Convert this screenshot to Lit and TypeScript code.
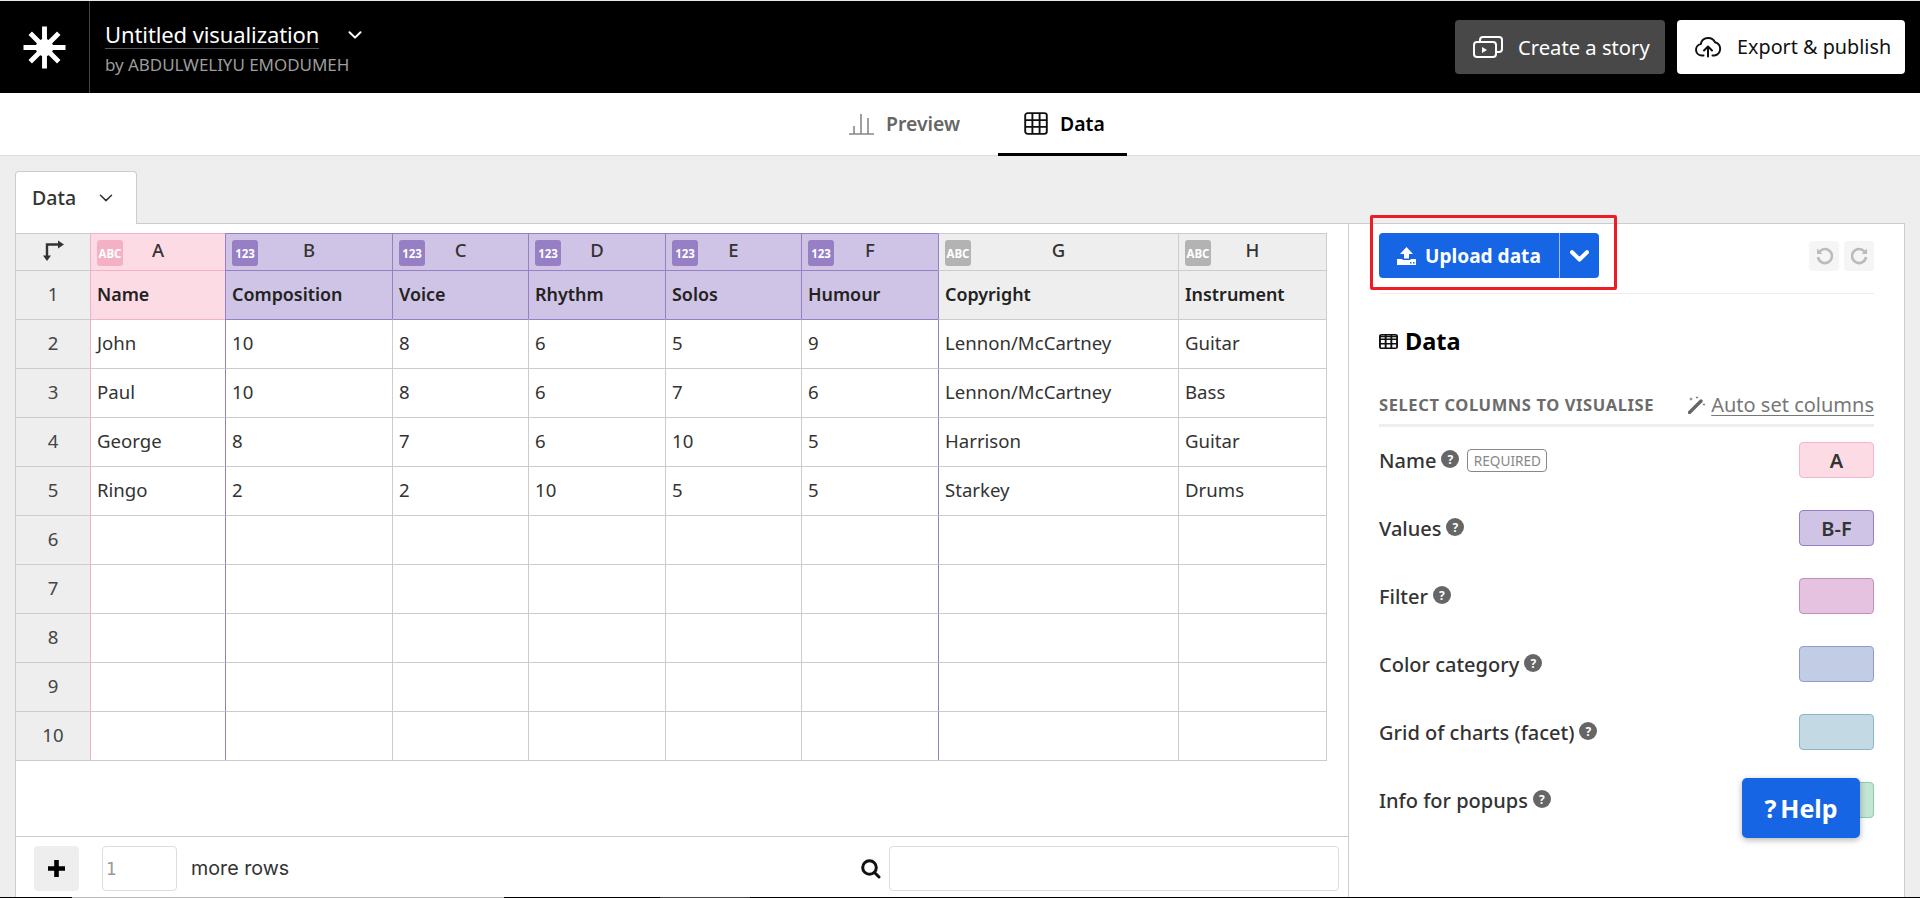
import { LitElement, html, css } from "lit";
import { customElement } from "lit/decorators.js";

type ColKind = "pink" | "purple" | "gray";
const cols: { l: string; name: string; kind: ColKind; badge: string; w: number; cells: string[] }[] = [
  { l: "A", name: "Name", kind: "pink", badge: "ABC", w: 135, cells: ["John", "Paul", "George", "Ringo"] },
  { l: "B", name: "Composition", kind: "purple", badge: "123", w: 167, cells: ["10", "10", "8", "2"] },
  { l: "C", name: "Voice", kind: "purple", badge: "123", w: 136, cells: ["8", "8", "7", "2"] },
  { l: "D", name: "Rhythm", kind: "purple", badge: "123", w: 137, cells: ["6", "6", "6", "10"] },
  { l: "E", name: "Solos", kind: "purple", badge: "123", w: 136, cells: ["5", "7", "10", "5"] },
  { l: "F", name: "Humour", kind: "purple", badge: "123", w: 137, cells: ["9", "6", "5", "5"] },
  { l: "G", name: "Copyright", kind: "gray", badge: "ABC", w: 240, cells: ["Lennon/McCartney", "Lennon/McCartney", "Harrison", "Starkey"] },
  { l: "H", name: "Instrument", kind: "gray", badge: "ABC", w: 148, cells: ["Guitar", "Bass", "Guitar", "Drums"] },
];

const bindings = [
  { label: "Name", req: true, value: "A", cls: "b-pink" },
  { label: "Values", req: false, value: "B-F", cls: "b-purple" },
  { label: "Filter", req: false, value: "", cls: "b-mauve" },
  { label: "Color category", req: false, value: "", cls: "b-blue" },
  { label: "Grid of charts (facet)", req: false, value: "", cls: "b-teal" },
  { label: "Info for popups", req: false, value: "", cls: "b-green" },
];

const chevron = (w: number, h: number, color: string, sw: number) => html`<svg width=${w} height=${h} viewBox="0 0 14 8" fill="none" stroke=${color} stroke-width=${sw} stroke-linecap="round" stroke-linejoin="round"><path d="M1.5 1.2 7 6.6 12.5 1.2"/></svg>`;

const logo = html`<svg width="43" height="43" viewBox="0 0 44 44" fill="none" stroke="#fff" stroke-width="5"><path d="M22 0.5V43.5M0.5 22H43.5M7.4 7.4 36.6 36.6M36.6 7.4 7.4 36.6"/><circle cx="22" cy="22" r="9" fill="#fff" stroke="none"/></svg>`;

const gridIcon = (w: number, h: number, sw: number) => html`<svg width=${w} height=${h} viewBox="0 0 24 24" fill="none" stroke="#111" stroke-width=${sw} preserveAspectRatio="none"><rect x="1.2" y="1.2" width="21.6" height="21.6" rx="2.5"/><path d="M8.4 1.2V22.8M15.6 1.2V22.8M1.2 8.4H22.8M1.2 15.6H22.8"/></svg>`;

@customElement("app-root")
export class AppRoot extends LitElement {
  static styles = css`
    :host { display: block; position: relative; height: 898px; overflow: hidden; background: #eee; font-family: "Noto Sans", "Open Sans", sans-serif; color: #333; }
    * { box-sizing: border-box; }
    .top { height: 93px; background: #000; border-top: 1px solid #e8e8e8; display: flex; align-items: stretch; color: #fff; }
    .logo { width: 90px; border-right: 1px solid #444; display: flex; align-items: center; justify-content: center; padding-right: 1px; }
    .meta { margin-left: 15px; display: flex; flex-direction: column; padding-top: 19px; }
    .title-row { display: flex; align-items: center; height: 29px; }
    .title { font-size: 22px; line-height: 28px; border-bottom: 1px solid #555; letter-spacing: -0.1px; }
    .title-row svg { margin-left: 29px; }
    .by { font-size: 17px; color: #9c9c9c; margin-top: 6px; line-height: 20px; letter-spacing: -0.05px; }
    .actions { margin-left: auto; margin-right: 15px; display: flex; gap: 12px; align-items: center; }
    .btn { height: 54px; border-radius: 4px; display: flex; align-items: center; font-size: 20.2px; padding-bottom: 1px; }
    .story { width: 210px; background: #484848; color: #fff; padding-left: 18px; gap: 15px; }
    .export { width: 228px; background: #fff; color: #111; padding-left: 18px; gap: 15px; font-size: 19.8px; }

    .tabs { height: 63px; background: #fff; border-bottom: 1px solid #ddd; display: flex; justify-content: center; padding-left: 30px; gap: 15px; }
    .tab { height: 63px; display: flex; align-items: center; gap: 12px; font-size: 19.4px; font-weight: 600; color: #666; padding: 0 0 2px 26px; width: 160px; }
    .tab.on { color: #000; border-bottom: 3px solid #000; padding-bottom: 0; width: 129px; }

    .main { height: 742px; padding: 15px 15px 0; display: flex; flex-direction: column; }
    .sheet-tab { width: 122px; height: 53px; background: #fff; border: 1px solid #ccc; border-bottom: none; border-radius: 4px 4px 0 0; display: flex; align-items: center; padding: 0 0 1px 16px; font-size: 19.5px; font-weight: 500; color: #333; margin-bottom: -1px; position: relative; z-index: 1; }
    .sheet-tab svg { margin-left: 23px; }
    .panel { flex: 1; background: #fff; border: 1px solid #ccc; border-bottom: none; display: flex; min-height: 0; }

    .left { width: 1333px; border-right: 1px solid #ccc; display: flex; flex-direction: column; }
    .table-wrap { flex: 1; padding-top: 9px; margin-left: -1px; }
    .table { display: grid; width: fit-content; grid-auto-rows: 49px; grid-template-rows: 37px; border-bottom: 1px solid #ccc; border-right: 1px solid #ccc; }
    .c { border-left: 1px solid #ccc; border-top: 1px solid #ccc; display: flex; align-items: center; padding: 0 0 4px 6px; font-size: 18.6px; color: #333; white-space: nowrap; }
    .idx { background: #eee; justify-content: center; padding: 0 0 4px; color: #444; }
    .hd { font-weight: 600; color: #222; font-size: 17.9px; padding-bottom: 2px; }
    .letter { position: relative; justify-content: center; padding: 0 0 6px; font-size: 18.5px; font-weight: 500; }
    .badge { position: absolute; left: 6px; top: 6px; width: 26px; height: 26px; border-radius: 3px; color: #fff; font-size: 11.5px; font-weight: 700; display: flex; align-items: center; justify-content: center; padding-top: 1px; }
    .pink { background: #fddbe5; border-color: #f4b0c6; }
    .purple { background: #cfc4e5; border-color: #967fc4; }
    .gray { background: #eee; }
    .badge.pink { background: #f4b0c4; }
    .badge.purple { background: #967fc4; }
    .badge.gray { background: #b3b3b3; }
    .lp { border-left-color: #f4b0c6; }
    .lv { border-left-color: #967fc4; }
    .tp { border-top-color: #f4b0c6; }
    .tv { border-top-color: #967fc4; }

    .foot { height: 62px; border-top: 1px solid #ccc; padding: 9px 9px 7px 18px; display: flex; align-items: stretch; }
    .plus { width: 45px; background: #eee; border-radius: 4px; display: flex; align-items: center; justify-content: center; }
    .num { width: 75px; margin-left: 23px; border: 1px solid #ddd; border-radius: 4px; font-family: "DejaVu Sans", sans-serif; font-size: 17px; color: #999; display: flex; align-items: center; padding-left: 3px; }
    .more { margin-left: 14px; display: flex; align-items: center; font-family: Inter, sans-serif; font-size: 19.7px; padding-bottom: 2px; }
    .search { margin-left: auto; display: flex; align-items: center; gap: 8px; }
    .search-in { width: 450px; height: 45px; border: 1px solid #ddd; border-radius: 4px; }

    .right { flex: 1; padding: 9px 30px 0; position: relative; }
    .toolbar { height: 61px; border-bottom: 1px solid #eee; display: flex; align-items: flex-start; }
    .upload { width: 220px; height: 45px; background: #1565e5; border-radius: 4px; display: flex; color: #fff; position: relative; }
    .upload-main { width: 181px; border-right: 1px solid #9fc0f3; display: flex; align-items: center; padding-left: 18px; gap: 9px; font-size: 19.1px; font-weight: 700; }
    .upload-more { flex: 1; display: flex; align-items: center; justify-content: center; }
    .annot { position: absolute; left: -9px; top: -18px; width: 247px; height: 75px; border: 3px solid #ee1c25; border-radius: 2px; pointer-events: none; }
    .hist { margin-left: auto; margin-top: 8px; display: flex; gap: 5px; }
    .hist span { width: 30px; height: 30px; background: #f5f5f5; border-radius: 4px; display: flex; align-items: center; justify-content: center; }
    .h-data { margin-top: 32px; height: 30px; display: flex; align-items: center; gap: 7px; font-size: 23.5px; font-weight: 700; color: #000; }
    .sel { margin-top: 38px; height: 33px; border-bottom: 3px solid #eee; display: flex; justify-content: space-between; align-items: flex-start; color: #6b6b6b; }
    .sel b { font-size: 16.5px; font-weight: 700; letter-spacing: 0.6px; line-height: 22px; }
    .auto { display: flex; align-items: center; gap: 5px; font-size: 20px; color: #777; text-decoration: underline; text-underline-offset: 3px; text-decoration-thickness: 1px; line-height: 22px; }
    .rows { margin-top: 15px; display: flex; flex-direction: column; gap: 32px; }
    .row { height: 36px; display: flex; align-items: center; font-size: 20px; font-weight: 500; color: #333; }
    .q { width: 18px; height: 18px; margin-left: 5px; border-radius: 50%; background: #666; color: #fff; font-size: 12px; font-weight: 700; display: flex; align-items: center; justify-content: center; margin-top: -2px; }
    .req { margin-left: 8px; height: 23px; width: 80px; border: 1px solid #888; border-radius: 4px; color: #888; font-size: 13.6px; font-weight: 400; display: flex; align-items: center; justify-content: center; }
    .box { margin-left: auto; width: 75px; height: 36px; border-radius: 4px; border: 1px solid; display: flex; align-items: center; justify-content: center; font-size: 20px; font-weight: 600; }
    .b-pink { background: #fddbe5; border-color: #f4b5cb; }
    .b-purple { background: #cfc4e5; border-color: #967fc4; }
    .b-mauve { background: #e5c3e0; border-color: #c78bbd; }
    .b-blue { background: #c3cce5; border-color: #8d9ccc; }
    .b-teal { background: #c3dae5; border-color: #8ab6cc; }
    .b-green { background: #c3e5d3; border-color: #8dccab; }

    .help { position: absolute; left: 1742px; top: 778px; width: 118px; height: 60px; background: #1565e5; border-radius: 5px; box-shadow: 0 2px 6px rgba(0,0,0,.3); color: #fff; font-size: 25px; font-weight: 700; display: flex; align-items: center; justify-content: center; gap: 4px; }
    .edge { position: absolute; left: 0; right: 0; bottom: 0; height: 1px; background: #000; display: flex; }
    .edge i { display: block; height: 1px; }
    .e1 { margin-left: 72px; width: 432px; background: #bbb; }
    .e2 { margin-left: 156px; width: 90px; background: #444; }
  `;

  private tableStyle() {
    return `grid-template-columns:75px ${cols.map((c) => c.w + "px").join(" ")}`;
  }

  render() {
    return html`
      <div class="top">
        <div class="logo">${logo}</div>
        <div class="meta">
          <div class="title-row"><span class="title">Untitled visualization</span>${chevron(14, 8, "#fff", 2)}</div>
          <div class="by">by ABDULWELIYU EMODUMEH</div>
        </div>
        <div class="actions">
          <div class="btn story">
            <svg width="30" height="22" viewBox="0 0 30 22" fill="none" stroke="#fff" stroke-width="2"><rect x="1" y="6" width="22" height="15" rx="3"/><path d="M7 6V4a3 3 0 0 1 3-3h16a3 3 0 0 1 3 3v9a3 3 0 0 1-3 3h-3"/><path d="M9 11v6l5-3z" fill="#fff" stroke="none"/></svg>
            Create a story
          </div>
          <div class="btn export">
            <svg width="27" height="23" viewBox="0 0 27 23" fill="none" stroke="#111" stroke-width="2" stroke-linecap="round" stroke-linejoin="round"><path d="M8.5 20.5H7A5.8 5.8 0 0 1 5.8 9 7.6 7.6 0 0 1 20 7.2 6.8 6.8 0 0 1 19.5 20.5H17.5"/><path d="M13 21.5V12M9 15.5l4-4 4 4"/></svg>
            Export &amp; publish
          </div>
        </div>
      </div>
      <div class="tabs">
        <div class="tab">
          <svg width="25" height="22" viewBox="0 0 25 22" fill="none" stroke="#888" stroke-width="1.6"><path d="M0 21H25M5 21V13M12 21V1M19 21V5"/></svg>
          Preview
        </div>
        <div class="tab on">${gridIcon(24, 23, 1.9)}Data</div>
      </div>
      <div class="main">
        <div class="sheet-tab">Data${chevron(14, 8, "#333", 1.5)}</div>
        <div class="panel">
          <div class="left">
            <div class="table-wrap">${this.renderTable()}</div>
            <div class="foot">
              <div class="plus"><svg width="17" height="17" viewBox="0 0 17 17" fill="#000"><path d="M6.2 0h4.6v6.2H17v4.6h-6.2V17H6.2v-6.2H0V6.2h6.2z"/></svg></div>
              <div class="num">1</div>
              <div class="more">more rows</div>
              <div class="search">
                <svg width="20" height="20" viewBox="0 0 20 20" fill="none" stroke="#111" stroke-width="3" stroke-linecap="round"><circle cx="8.5" cy="8.5" r="6.8"/><path d="M13.5 13.5 18 18"/></svg>
                <div class="search-in"></div>
              </div>
            </div>
          </div>
          <div class="right">
            <div class="toolbar">
              <div class="upload">
                <div class="annot"></div>
                <div class="upload-main">
                  <svg width="19" height="18" viewBox="0 0 19 18" fill="#fff"><path d="M9.5 0 16 7H12V11.5H7V7H3z"/><path d="M0 12h5.5v1h8v-1H19v6H0z"/><rect x="13" y="15" width="1.5" height="1.5" fill="#1565e5"/><rect x="16" y="15" width="1.5" height="1.5" fill="#1565e5"/></svg>
                  Upload data
                </div>
                <div class="upload-more">${chevron(19, 12, "#fff", 3)}</div>
              </div>
              <div class="hist">
                <span><svg width="17" height="18" viewBox="0 0 17 18" fill="none" stroke="#bbb" stroke-width="2.6"><path d="M3.6 4.5A7 7 0 1 1 2 10"/><path d="M1 1.5V7H6.5z" fill="#bbb" stroke="none"/></svg></span>
                <span><svg width="17" height="18" viewBox="0 0 17 18" fill="none" stroke="#bbb" stroke-width="2.6"><path d="M13.4 4.5A7 7 0 1 0 15 10"/><path d="M16 1.5V7H10.5z" fill="#bbb" stroke="none"/></svg></span>
              </div>
            </div>
            <div class="h-data">
              <svg width="19" height="15" viewBox="0 0 24 24" fill="none" stroke="#111" stroke-width="2.4" preserveAspectRatio="none"><rect x="1.2" y="1.2" width="21.6" height="21.6" rx="2"/><path d="M8.4 1.2V22.8M15.6 1.2V22.8M1.2 8.4H22.8M1.2 15.6H22.8M1 4H23"/></svg>
              Data
            </div>
            <div class="sel">
              <b>SELECT COLUMNS TO VISUALISE</b>
              <span class="auto">
                <svg width="18" height="18" viewBox="0 0 18 18" fill="none"><path d="M1.5 16.5 13 5" stroke="#666" stroke-width="3.4" stroke-linecap="round"/><path d="M3 1l.5 1.5L5 3l-1.5.5L3 5l-.5-1.5L1 3l1.5-.5zM9 0l.4 1.1 1.1.4-1.1.4L9 3l-.4-1.1L7.5 1.5l1.1-.4zM16 7l.4 1.1 1.1.4-1.1.4-.4 1.1-.4-1.1-1.1-.4 1.1-.4z" fill="#666"/></svg>
                Auto set columns
              </span>
            </div>
            <div class="rows">
              ${bindings.map(
                (b) => html`<div class="row">
                  ${b.label}<span class="q">?</span>
                  ${b.req ? html`<span class="req">REQUIRED</span>` : ""}
                  <span class="box ${b.cls}">${b.value}</span>
                </div>`
              )}
            </div>
          </div>
        </div>
      </div>
      <div class="help"><span>?</span><span>Help</span></div>
      <div class="edge"><i class="e1"></i><i class="e2"></i></div>
    `;
  }

  private renderTable() {
    const leftCls = (i: number) => {
      const k = cols[i].kind;
      const prev = i > 0 ? cols[i - 1].kind : "pink";
      if (k === "pink") return "lp";
      if (k === "purple" || prev === "purple") return "lv";
      return "";
    };
    const dataLeft = (i: number) => {
      if (i === 0) return "lp";
      if (i === 1 || i === 6) return "lv";
      return "";
    };
    const rows = [];
    rows.push(html`<div class="c idx">
      <svg width="22" height="22" viewBox="0 0 22 22" fill="none" stroke="#333" stroke-width="2.4"><path d="M5 20V5.5H18"/><path d="M16 1.5 22 5.5 16 9.5zM1 16.5 5 22 9 16.5z" fill="#333" stroke="none"/></svg>
    </div>`);
    cols.forEach((c, i) => rows.push(html`<div class="c letter ${c.kind} ${leftCls(i)}">
      <span class="badge ${c.kind}">${c.badge}</span>${c.l}
    </div>`));
    rows.push(html`<div class="c idx">1</div>`);
    cols.forEach((c, i) => rows.push(html`<div class="c hd ${c.kind} ${leftCls(i)}">${c.name}</div>`));
    for (let r = 2; r <= 10; r++) {
      rows.push(html`<div class="c idx">${r}</div>`);
      cols.forEach((c, i) => {
        const top = r === 2 ? (c.kind === "pink" ? "tp" : c.kind === "purple" ? "tv" : "") : "";
        rows.push(html`<div class="c ${dataLeft(i)} ${top}">${c.cells[r - 2] ?? ""}</div>`);
      });
    }
    return html`<div class="table" style=${this.tableStyle()}>${rows}</div>`;
  }
}
